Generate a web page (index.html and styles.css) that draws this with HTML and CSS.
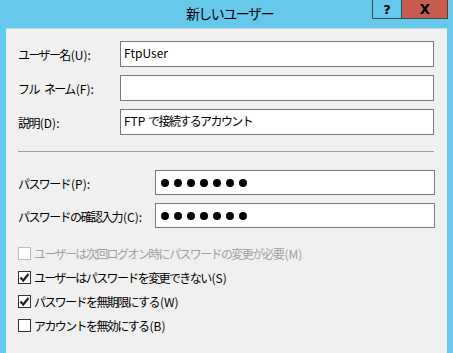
FILE: index.html
```html
<!DOCTYPE html>
<html lang="ja">
<head>
  <meta charset="UTF-8">
  <title>新しいユーザー</title>
  <link rel="stylesheet" href="styles.css">
</head>
<body>
  <div class="window">
    <div class="titlebar">
      <span class="title">新しいユーザー</span>
      <div class="caption-btns">
        <span class="cbtn help">?</span>
        <span class="cbtn close">
          <svg width="12" height="10" viewBox="0 0 12 10"><path d="M1 0h3l2 3 2-3h3l-3.5 5L11 10H8L6 7 4 10H1l3.5-5z" fill="#000"/></svg>
        </span>
      </div>
    </div>
    <div class="client">
      <div class="group">
        <div class="row"><label><span class="ja">ユーザー名</span>(U):</label><div class="field">FtpUser</div></div>
        <div class="row"><label><span class="ja">フル ネーム</span>(F):</label><div class="field"></div></div>
        <div class="row"><label><span class="ja">説明</span>(D):</label><div class="field">FTP <span class="ja">で接続するアカウント</span></div></div>
      </div>
      <hr class="sep">
      <div class="group pw">
        <div class="row"><label><span class="ja">パスワード</span>(P):</label><div class="field dots"><i></i><i></i><i></i><i></i><i></i><i></i><i></i></div></div>
        <div class="row"><label><span class="ja">パスワードの確認入力</span>(C):</label><div class="field dots"><i></i><i></i><i></i><i></i><i></i><i></i><i></i></div></div>
      </div>
      <div class="checks">
        <div class="check disabled"><span class="box"></span><span class="ja">ユーザーは次回ログオン時にパスワードの変更が必要</span>(M)</div>
        <div class="check"><span class="box on"><svg width="11" height="11" viewBox="0 0 11 11"><path d="M1.5 5.5l2.8 3L9.5 2" fill="none" stroke="#222" stroke-width="2.2"/></svg></span><span class="ja">ユーザーはパスワードを変更できない</span>(S)</div>
        <div class="check"><span class="box on"><svg width="11" height="11" viewBox="0 0 11 11"><path d="M1.5 5.5l2.8 3L9.5 2" fill="none" stroke="#222" stroke-width="2.2"/></svg></span><span class="ja">パスワードを無期限にする</span>(W)</div>
        <div class="check"><span class="box"></span><span class="ja">アカウントを無効にする</span>(B)</div>
      </div>
    </div>
  </div>
</body>
</html>
```

FILE: styles.css
```css
body {
  margin: 0;
  background: #66c9ec;
  font-family: "Noto Sans CJK JP", "Noto Sans", sans-serif;
  font-size: 12px;
  color: #000;
  overflow: hidden;
}

.window {
  width: 453px;
  height: 353px;
  padding: 0 6px;
  box-sizing: border-box;
  background: #66c9ec;
}

.titlebar {
  height: 28px;
  position: relative;
  display: flex;
  justify-content: center;
  align-items: center;
}

.title {
  font-size: 14px;
  letter-spacing: -1.5px;
  margin-top: -2px;
  margin-left: 6px;
}

.caption-btns {
  position: absolute;
  top: 0;
  right: -1px;
  display: flex;
}

.cbtn {
  height: 19px;
  box-sizing: border-box;
  border: 1px solid #3a4a52;
  border-top: none;
  display: flex;
  align-items: center;
  justify-content: center;
  font-family: "DejaVu Sans", sans-serif;
  font-weight: bold;
  font-size: 13px;
}

.help {
  width: 29px;
  border-right: none;
}

.close {
  width: 47px;
  background: #c75c4f;
}

.client {
  background: #f0f0f0;
  border-top: 1px solid #c9d6dc;
  height: 325px;
  padding: 12px 12px 0;
  box-sizing: border-box;
}

.ja {
  letter-spacing: -1.6px;
  word-spacing: 4px;
  margin-right: 1px;
}

.group {
  display: flex;
  flex-direction: column;
  gap: 8px;
}

.row {
  display: flex;
  align-items: center;
}

.row label {
  width: 102px;
  flex: none;
  padding-top: 2px;
  white-space: nowrap;
  line-height: 16px;
}

.pw .row label {
  width: 137px;
}

.field {
  width: 314px;
  height: 26px;
  box-sizing: border-box;
  background: #fff;
  border: 1px solid #7a7a7a;
  padding: 3px 3px 0;
  line-height: 16px;
}

.pw .field {
  width: 280px;
  height: 25px;
}

.dots {
  display: flex;
  align-items: center;
  gap: 5px;
  padding: 0 0 0 5px;
}

.dots i {
  width: 8px;
  height: 8px;
  border-radius: 50%;
  background: #000;
}

.sep {
  border: none;
  border-top: 1px solid #a0a0a0;
  margin: 16px 0 18px;
  width: 416px;
}

.checks {
  margin-top: 19px;
  display: flex;
  flex-direction: column;
  gap: 11px;
}

.check {
  display: flex;
  align-items: center;
  height: 13px;
  line-height: 13px;
  white-space: nowrap;
}

.box {
  width: 13px;
  height: 13px;
  box-sizing: border-box;
  border: 1px solid #333;
  background: #fff;
  margin-right: 3px;
  display: flex;
  align-items: center;
  justify-content: center;
}

.disabled {
  color: #a0a0a0;
}

.disabled .box {
  border-color: #bcbcbc;
}
```
